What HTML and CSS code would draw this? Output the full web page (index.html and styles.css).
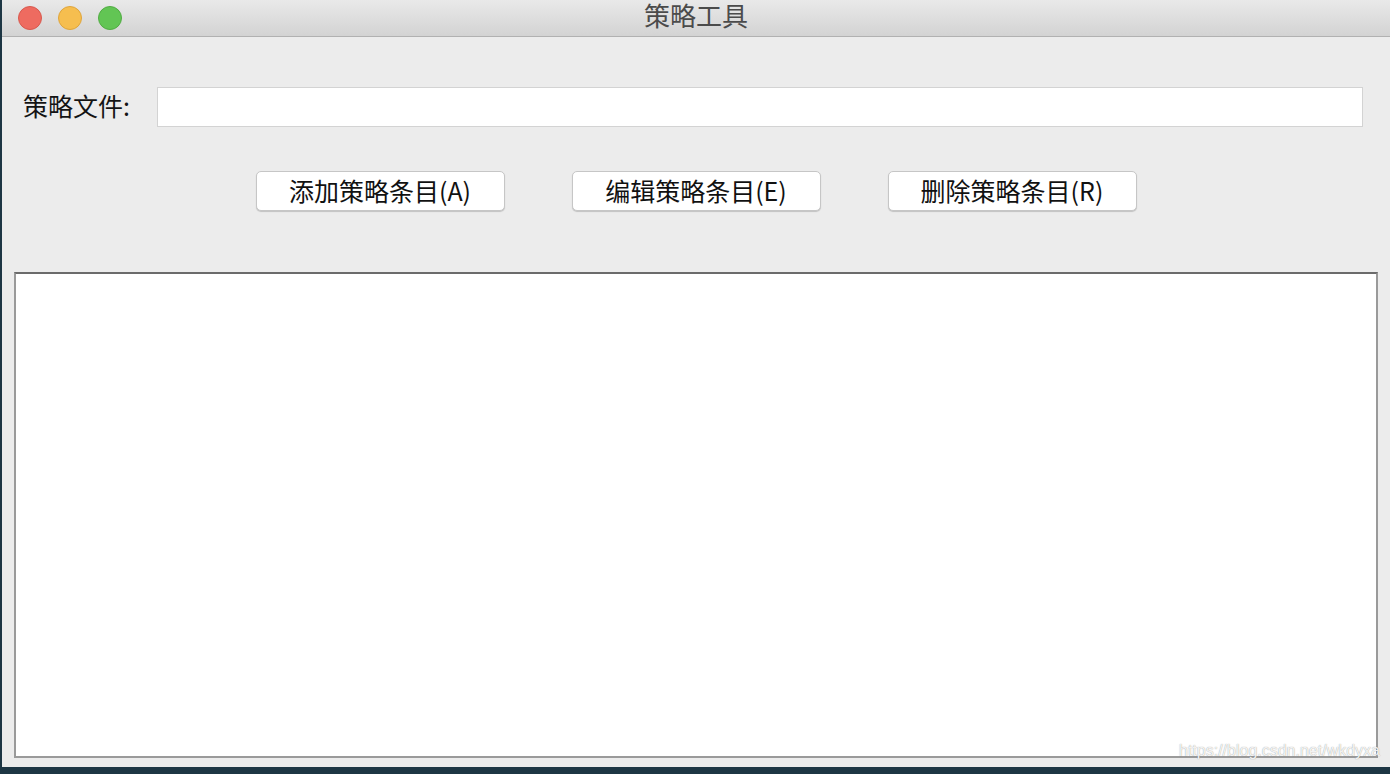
FILE: index.html
```html
<!DOCTYPE html>
<html lang="zh">
<head>
<meta charset="utf-8">
<title>策略工具</title>
<link rel="stylesheet" href="styles.css">
</head>
<body>
<div class="window">
  <div class="titlebar">
    <div class="lights">
      <span class="light red"></span>
      <span class="light yellow"></span>
      <span class="light green"></span>
    </div>
    <div class="title">策略工具</div>
    <div></div>
  </div>
  <div class="content">
    <div class="file-row">
      <label class="file-label">策略文件:</label>
      <input class="file-input" type="text">
    </div>
    <div class="button-row">
      <button class="btn">添加策略条目(A)</button>
      <button class="btn">编辑策略条目(E)</button>
      <button class="btn">删除策略条目(R)</button>
    </div>
    <div class="list"></div>
  </div>
  <div class="watermark">https://blog.csdn.net/wkdyxa</div>
</div>
</body>
</html>
```

FILE: styles.css
```css
html, body {
  margin: 0;
  padding: 0;
}
body {
  background: #1d3644;
  width: 1390px;
  height: 774px;
  overflow: hidden;
  font-family: "Noto Sans CJK SC", "Noto Sans", sans-serif;
}
.window {
  position: relative;
  margin-left: 2px;
  width: 1388px;
  height: 767px;
  background: #ececec;
  display: flex;
  flex-direction: column;
}
.titlebar {
  height: 36px;
  border-bottom: 1px solid #b1b1b1;
  background: linear-gradient(#e9e9e9, #d3d3d3);
  display: grid;
  grid-template-columns: 1fr auto 1fr;
  align-items: center;
}
.lights {
  display: flex;
  gap: 16px;
  padding-left: 16px;
}
.light {
  width: 22px;
  height: 22px;
  border-radius: 50%;
  display: block;
}
.red { background: #ee6b60; border: 1px solid #d8594e; }
.yellow { background: #f6be4f; border: 1px solid #dfa53c; }
.green { background: #62c554; border: 1px solid #51ac43; }
.title {
  font-size: 26px;
  color: #4b4b4b;
  line-height: 38px;
  margin-top: -6px;
}
.content {
  flex: 1;
  display: flex;
  flex-direction: column;
  padding: 50px 12px 9px 12px;
  min-height: 0;
}
.file-row {
  display: flex;
  align-items: center;
  padding: 0 15px 0 9px;
}
.file-label {
  flex: none;
  width: 134px;
  font-size: 25px;
  line-height: 36px;
  padding-bottom: 4px;
  color: #141414;
}
.file-input {
  flex: 1;
  height: 40px;
  box-sizing: border-box;
  border: 1px solid #d3d3d3;
  background: #fff;
  margin: 0;
  outline: none;
}
.button-row {
  display: flex;
  justify-content: center;
  gap: 67px;
  margin-top: 44px;
}
.btn {
  width: 249px;
  height: 40px;
  box-sizing: border-box;
  background: #fff;
  border: 1px solid #c6c6c6;
  border-radius: 5px;
  box-shadow: 0 1px 1px rgba(0, 0, 0, 0.18);
  font-family: "Noto Sans CJK SC", "Noto Sans", sans-serif;
  font-size: 25px;
  color: #111;
  padding: 0 0 2px 0;
  line-height: 34px;
}
.list {
  flex: 1;
  margin-top: 61px;
  background: #fff;
  border: 2px solid #9a9a9a;
  border-top-color: #6b6b6b;
}
.watermark {
  position: absolute;
  right: 10px;
  bottom: 7px;
  font-family: "Liberation Sans", sans-serif;
  font-size: 16px;
  color: rgba(255, 255, 255, 0.9);
  text-shadow: 0 0 1px rgba(110, 110, 110, 0.8);
}
```
